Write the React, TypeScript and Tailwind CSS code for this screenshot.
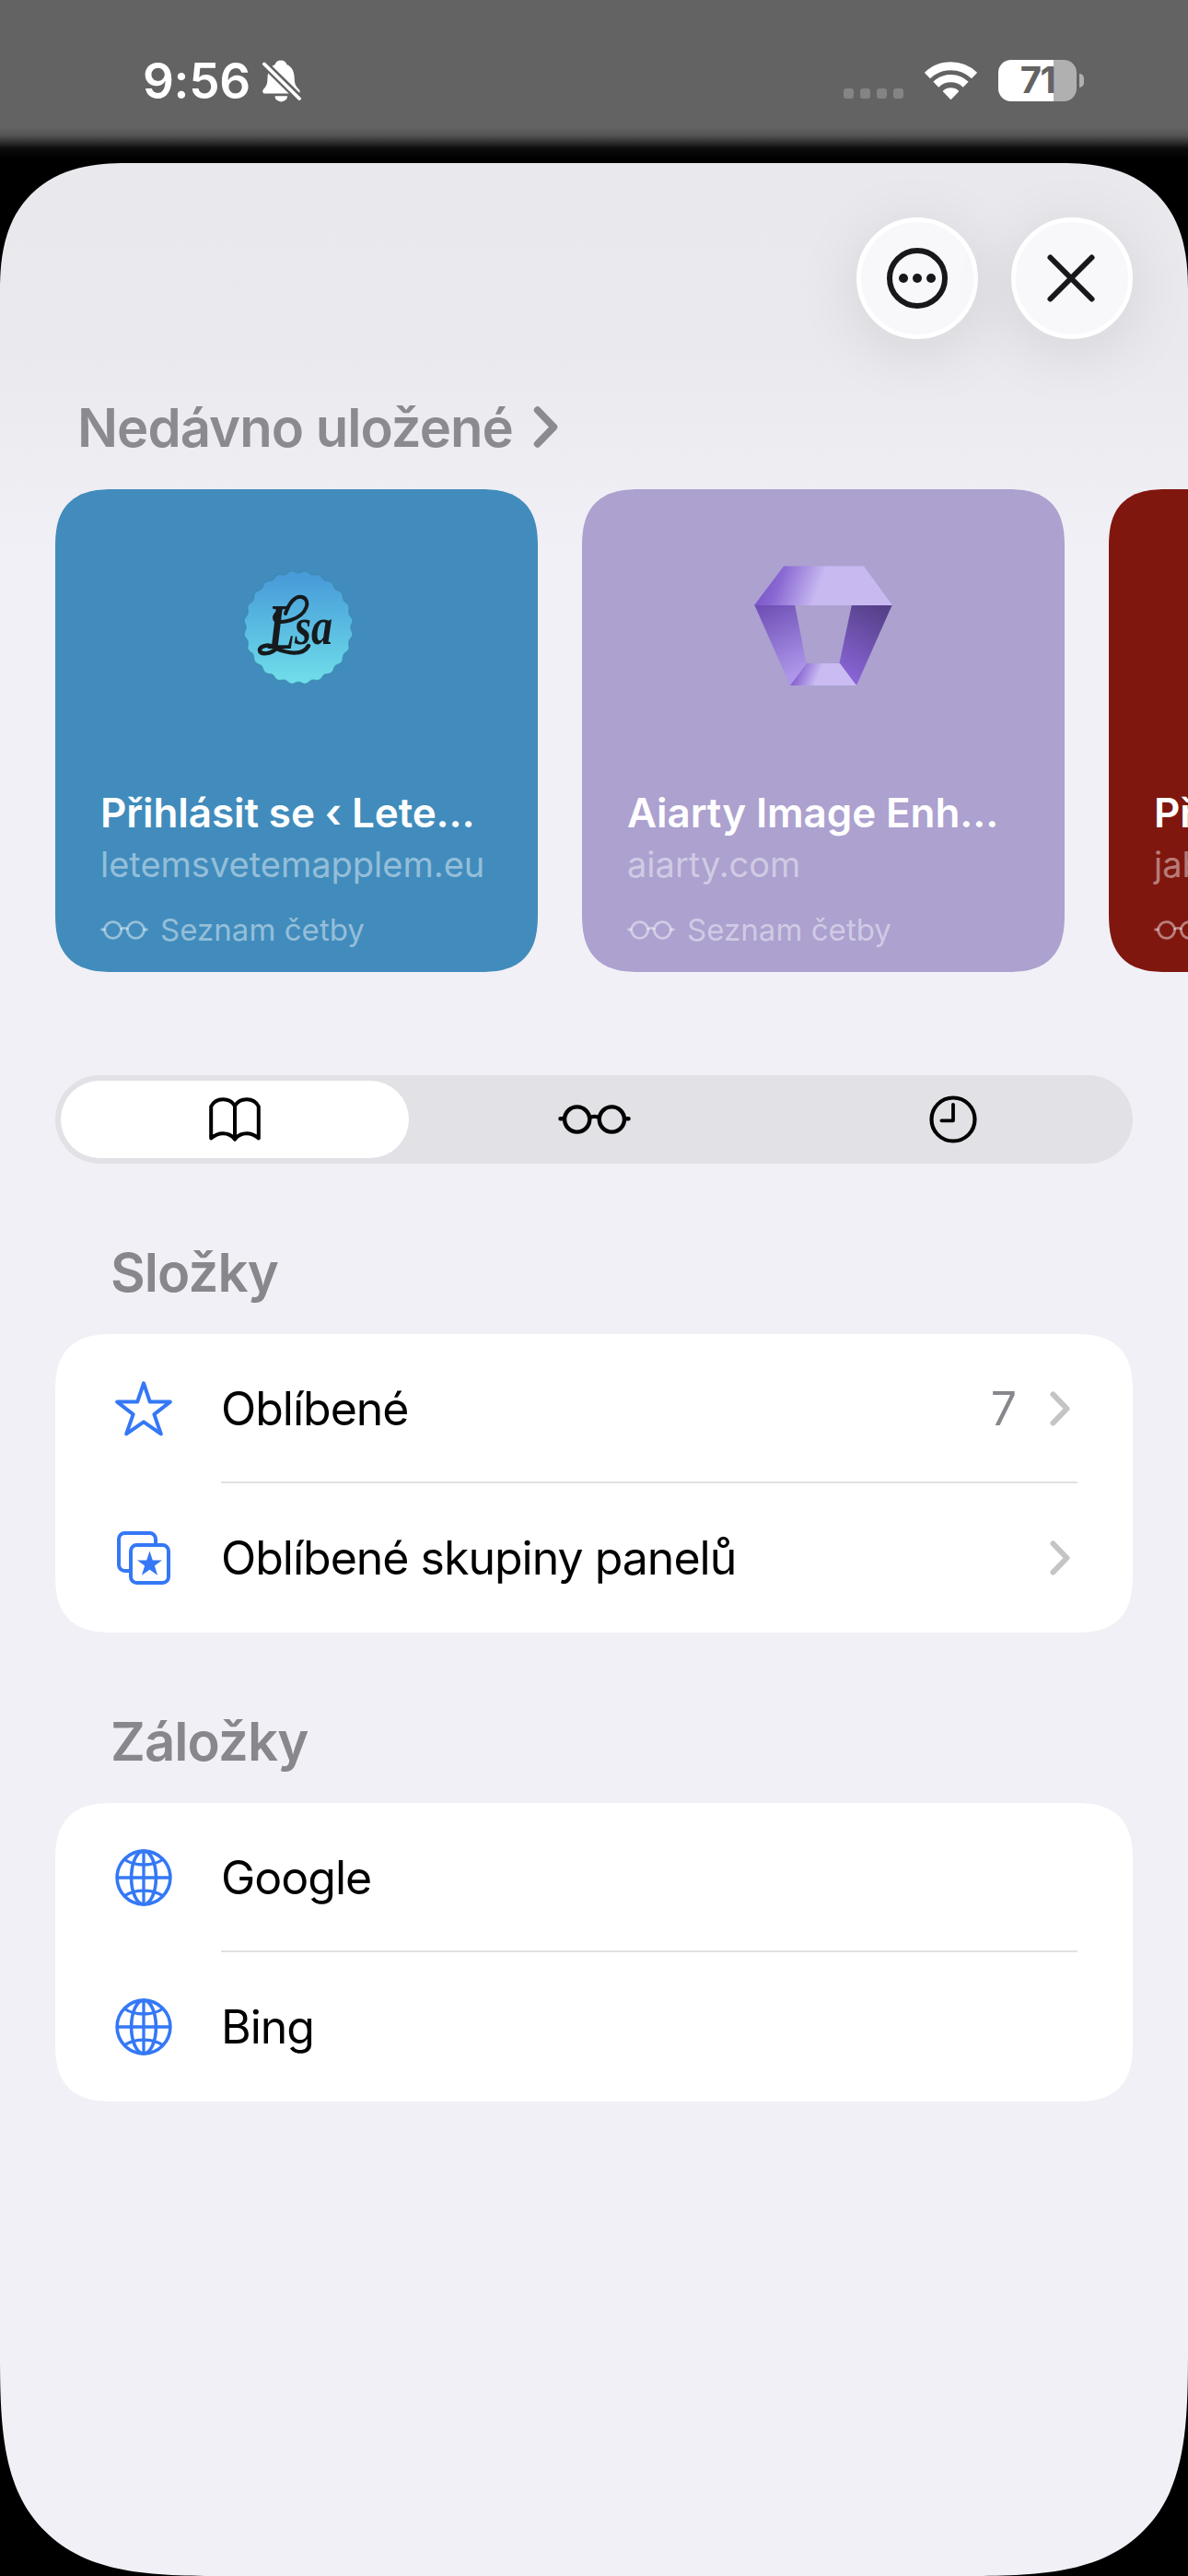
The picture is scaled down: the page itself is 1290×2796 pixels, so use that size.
import type { ReactNode } from "react"

type SavedCard = {
  title: string
  site: string
  color: string
  logo?: ReactNode
}

type Row = {
  label: string
  icon: ReactNode
  count?: number
  chevron?: boolean
}

function BellOffIcon() {
  return (
    <svg className="h-[46px] w-[43px]" viewBox="0 0 43 46" fill="none">
      <path
        fill="#fff"
        d="M20 .5c3.5 0 5.8 2 6.3 4.6 6 2.6 8.2 8 8.4 14.6.2 6 1 8.5 4.9 12.3 2 2.2 1 4.6-1.9 4.6H3c-2.8 0-3.8-2.8-1.6-5C5 27.5 5.3 25 5.5 19.7 5.8 13 8 7.5 13.7 5.1 14.2 2.5 16.5.5 20 .5z"
      />
      <path fill="#fff" d="M13.5 39.2h13.6a6.8 6.2 0 0 1-13.6 0z" />
      <path stroke="#636363" strokeWidth="8.6" d="M-3 -.5 45 46.5" />
      <path stroke="#fff" strokeWidth="3.8" strokeLinecap="round" d="M2 4.5 40 42" />
    </svg>
  )
}

function WifiIcon() {
  return (
    <svg className="h-[43px] w-[57px]" viewBox="0 0 57 43" fill="none" stroke="#fff">
      <path strokeWidth="9" d="M2.9 16.1a36.8 36.8 0 0 1 51.2 0" />
      <path strokeWidth="8.4" d="M12.3 25.8a23 23 0 0 1 32.4 0" />
      <path
        fill="#fff"
        strokeWidth="1.5"
        strokeLinejoin="round"
        d="M28.5 41.2 20.6 33a11.8 11.8 0 0 1 15.8 0z"
      />
    </svg>
  )
}

function GlassesIcon({ className }: { className: string }) {
  return (
    <svg className={className} viewBox="0 0 78.5 32" fill="none" stroke="currentColor" strokeWidth="4.4">
      <circle cx="20.4" cy="16" r="13.6" />
      <circle cx="58.1" cy="16" r="13.6" />
      <path strokeLinecap="round" d="M2.2 15.3h3.6M72.7 15.3h3.6" />
      <path d="M33.4 15c2.4-2.9 9.2-2.9 11.7 0" />
    </svg>
  )
}

function BookIcon() {
  return (
    <svg
      className="h-[48px] w-[56px]"
      viewBox="0 0 56 48"
      fill="none"
      stroke="currentColor"
      strokeWidth="4"
      strokeLinecap="round"
      strokeLinejoin="round"
    >
      <path d="M28 45.5C24.8 41.4 20.6 39.2 15.2 39.2 10 39.2 5.8 41.2 2.2 44.4V10C4.6 5 9.4 2.2 15.2 2.2 20.8 2.2 25.6 5 28 9.4" />
      <path d="M28 45.5c3.2-4.1 7.4-6.3 12.8-6.3 5.2 0 9.4 2 13 5.2V10C51.4 5 46.6 2.2 40.8 2.2 35.2 2.2 30.4 5 28 9.4V45" />
    </svg>
  )
}

function ClockIcon() {
  return (
    <svg className="size-[52px]" viewBox="0 0 52 52" fill="none" stroke="currentColor" strokeWidth="4.2">
      <circle cx="26" cy="26" r="23.5" />
      <path strokeWidth="3.8" strokeLinecap="round" strokeLinejoin="round" d="M26 10v17.3H13.4" />
    </svg>
  )
}

function StarIcon() {
  return (
    <svg
      className="h-[60px] w-[62px]"
      viewBox="0 0 62 60"
      fill="none"
      stroke="currentColor"
      strokeWidth="4"
      strokeLinejoin="round"
    >
      <path d="M31 2.4 37.8 22.6H59.8L42.4 36.2 49.8 57.4 31 44.4 12.2 57.4 19.6 36.2 2.2 22.6H24.2z" />
    </svg>
  )
}

function TabGroupIcon() {
  return (
    <svg className="ml-[2px] size-[58px]" viewBox="0 0 58 58" fill="none" stroke="currentColor" strokeWidth="4">
      <path d="M13 43H8.5A6.5 6.5 0 0 1 2 36.5V8.5A6.5 6.5 0 0 1 8.5 2h27A6.5 6.500 0 0 1 42 8.500V14" />
      <rect x="15" y="15" width="41" height="41" rx="6.500" />
      <path
        fill="currentColor"
        stroke="none"
        d="M35.500 21.500 38.800 31.400H49L40.900 37.600 44.100 47.800 35.500 41.700 26.900 47.800 30.100 37.600 22 31.400H32.200z"
      />
    </svg>
  )
}

function GlobeIcon() {
  return (
    <svg className="size-[62px]" viewBox="0 0 62 62" fill="none" stroke="currentColor" strokeWidth="3.6">
      <circle cx="31" cy="31" r="28.900" />
      <ellipse cx="31" cy="31" rx="13.400" ry="28.900" />
      <path strokeWidth="3.300" d="M31 2v58M2 31h58" />
      <path strokeWidth="3.300" d="M10.500 11.500c11 7.300 30 7.300 41 0M10.500 50.500c11-7.300 30-7.300 41 0" />
    </svg>
  )
}

function Chevron({ className, strokeWidth }: { className: string; strokeWidth: number }) {
  return (
    <svg
      className={className}
      viewBox="0 0 22 38"
      fill="none"
      stroke="currentColor"
      strokeWidth={strokeWidth}
      strokeLinecap="round"
      strokeLinejoin="round"
    >
      <path d="M3.500 3.500 18.500 19 3.500 34.500" />
    </svg>
  )
}

// Wavy outline of the round badge
const badgePath =
  Array.from({ length: 240 }, (_, i) => {
    const a = (i / 240) * Math.PI * 2
    const r = 60.5 - 1.3 * Math.cos(a * 24)
    return `${i === 0 ? "M" : "L"}${(62 + r * 0.96 * Math.sin(a)).toFixed(2)} ${(63 - r * Math.cos(a)).toFixed(2)}`
  }).join("") + "z"

function LsaLogo() {
  return (
    <svg className="ml-[4px] h-[126px] w-[124px]" viewBox="0 0 124 126">
      <defs>
        <linearGradient id="lsa" x1="0" y1="0" x2="0" y2="1">
          <stop offset="0.050" stopColor="#489cd9" />
          <stop offset="0.650" stopColor="#60c6e4" />
          <stop offset="1" stopColor="#72dfeb" />
        </linearGradient>
      </defs>
      <path d={badgePath} fill="url(#lsa)" stroke="#3a86ad" strokeOpacity="0.600" strokeWidth="1.500" />
      <g fill="#161a1c" fontFamily="Liberation Serif, serif" fontStyle="italic" fontWeight="700">
        <text x="29" y="86" fontSize="70" textLength="29" lengthAdjust="spacingAndGlyphs">
          L
        </text>
        <text x="58" y="81" fontSize="56" textLength="41" lengthAdjust="spacingAndGlyphs">
          sa
        </text>
      </g>
      <g fill="none" stroke="#161a1c" strokeLinecap="round">
        <path strokeWidth="4.500" d="M36 85c-7-5-17-1-16 3 1 5 12 4 18-2 10 4 28 9 35-3" />
        <path strokeWidth="4" d="M48 48c4-12 11-20 18-18 10 3 6 19-12 25-10 3-18 3-18-3 0-2 2-4 4-6" />
      </g>
    </svg>
  )
}

function GemLogo() {
  return (
    <svg className="mb-[5px] h-[130px] w-[150px]" viewBox="0 0 150 130">
      <defs>
        <linearGradient id="gem-top" gradientUnits="userSpaceOnUse" x1="12" y1="18" x2="66" y2="38">
          <stop offset="0" stopColor="#7e5bcc" />
          <stop offset="0.250" stopColor="#8a69d3" />
          <stop offset="1" stopColor="#c8baf1" />
        </linearGradient>
        <linearGradient id="gem-left" x1="0" y1="0" x2="0.300" y2="1">
          <stop offset="0" stopColor="#6b4bb2" />
          <stop offset="1" stopColor="#ad96ea" />
        </linearGradient>
        <linearGradient id="gem-right" x1="0.700" y1="0" x2="0.300" y2="1">
          <stop offset="0" stopColor="#554088" />
          <stop offset="1" stopColor="#8b66da" />
        </linearGradient>
        <linearGradient id="gem-bottom" gradientUnits="userSpaceOnUse" x1="46" y1="115" x2="68" y2="124">
          <stop offset="0" stopColor="#8561cf" />
          <stop offset="1" stopColor="#cabbf2" />
        </linearGradient>
      </defs>
      <path fill="url(#gem-left)" d="M0 42H44L57 108 39 130z" />
      <path fill="url(#gem-right)" d="M106 42H150L111 130 92 108z" />
      <path fill="url(#gem-top)" d="M32 .5H119L150 43H0z" />
      <path fill="url(#gem-bottom)" d="M57 106H93L111 130H39z" />
    </svg>
  )
}

const savedCards: SavedCard[] = [
  { title: "Přihlásit se ‹ Lete…", site: "letemsvetemapplem.eu", color: "bg-[#418cbc]", logo: <LsaLogo /> },
  { title: "Aiarty Image Enh…", site: "aiarty.com", color: "bg-[#aca1cf]", logo: <GemLogo /> },
  { title: "Přihlásit se ‹ Jabl…", site: "jablickar.cz", color: "bg-[#7f170f]" },
]

const sections: { name: string; rows: Row[] }[] = [
  {
    name: "Složky",
    rows: [
      { label: "Oblíbené", icon: <StarIcon />, count: 7, chevron: true },
      { label: "Oblíbené skupiny panelů", icon: <TabGroupIcon />, chevron: true },
    ],
  },
  {
    name: "Záložky",
    rows: [
      { label: "Google", icon: <GlobeIcon /> },
      { label: "Bing", icon: <GlobeIcon /> },
    ],
  },
]

function StatusBar() {
  return (
    <header className="flex h-[177px] items-start justify-between bg-[linear-gradient(to_bottom,#636363_0,#636363_138px,#545454_147px,#2c2c2c_155px,#0c0c0c_161px,#000_172px)] pr-[113px] pl-[155px] text-white">
      <div className="mt-[65px] flex h-[46px] items-center gap-[13px]">
        <span className="text-[53px] leading-[46px] font-semibold tracking-[-0.3px]">9:56</span>
        <BellOffIcon />
      </div>
      <div className="mt-[64px] flex h-[46px] items-center">
        <div className="mr-[23px] flex gap-[7px] pt-[29px]">
          {[0, 1, 2, 3].map((dot) => (
            <span key={dot} className="size-[11px] rounded-[3px] bg-[#848484]" />
          ))}
        </div>
        <WifiIcon />
        <div className="ml-[23px] flex h-[45px] w-[85px] items-center justify-center overflow-hidden rounded-[14px] bg-[linear-gradient(to_right,#fff_60px,#b0b0b0_60px)]">
          <span className="text-[40px] leading-none font-bold tracking-[-1.5px] text-[#636363]">71</span>
        </div>
        <span className="ml-[3px] h-[15px] w-[5px] rounded-r-full bg-[#b0b0b0]" />
      </div>
    </header>
  )
}

function RoundButton({ children }: { children: ReactNode }) {
  return (
    <button className="flex size-[132px] items-center justify-center rounded-full border-[5px] border-white bg-[#f8f8fb] text-[#18181a] shadow-[0_12px_70px_rgba(0,0,0,0.1)]">
      {children}
    </button>
  )
}

function SavedCardView({ card }: { card: SavedCard }) {
  return (
    <article
      className={`flex size-[524px] shrink-0 flex-col rounded-[64px] px-[49px] text-white [corner-shape:superellipse(1.4)] ${card.color}`}
    >
      <div className="flex h-[300px] items-center justify-center">{card.logo}</div>
      <h3 className="mt-[21px] text-[44px] leading-[60px] font-semibold tracking-[-0.1px] whitespace-nowrap">
        {card.title}
      </h3>
      <p className="text-[38px] leading-[52px] whitespace-nowrap text-white/45">{card.site}</p>
      <div className="mt-[20px] flex items-center gap-[13px] text-white/45">
        <GlassesIcon className="h-[21px] w-[52px]" />
        <span className="text-[33px] leading-[50px] tracking-[0.05px] whitespace-nowrap">Seznam četby</span>
      </div>
    </article>
  )
}

export default function App() {
  return (
    <div className="h-[2796px] w-[1290px] overflow-hidden bg-black font-[Inter,sans-serif]">
      <StatusBar />
      <main className="h-[2619px] overflow-hidden rounded-t-[138px] rounded-b-[246px] bg-[linear-gradient(to_bottom,#e9e8ed_0,#eae9ee_200px,#f1f0f6_430px)] px-[60px] [corner-shape:superellipse(1.3)_superellipse(1.3)_superellipse(1.65)_superellipse(1.65)]">
        <div className="flex justify-end gap-[36px] pt-[59px]">
          <RoundButton>
            <svg className="size-[68px]" viewBox="0 0 68 68" fill="none" stroke="currentColor" strokeWidth="6">
              <circle cx="34" cy="34" r="30" />
              <g fill="currentColor" stroke="none">
                <circle cx="19" cy="34" r="5" />
                <circle cx="34" cy="34" r="5" />
                <circle cx="49" cy="34" r="5" />
              </g>
            </svg>
          </RoundButton>
          <RoundButton>
            <svg
              className="mr-[2px] size-[54px]"
              viewBox="0 0 54 54"
              stroke="currentColor"
              strokeWidth="6"
              strokeLinecap="round"
            >
              <path d="M4.500 4.500 49.500 49.500M49.500 4.500 4.500 49.500" />
            </svg>
          </RoundButton>
        </div>

        <div className="flex h-[163px] items-center gap-[22px] pt-[28px] pl-[24px] text-[#8a8a8f]">
          <h2 className="text-[58px] leading-[70px] font-semibold tracking-[-0.95px]">Nedávno uložené</h2>
          <Chevron className="h-[45px] w-[27px]" strokeWidth={6.5} />
        </div>
        <div className="flex gap-[48px]">
          {savedCards.map((card) => (
            <SavedCardView key={card.site} card={card} />
          ))}
        </div>

        <div className="mt-[112px] flex h-[96px] rounded-full bg-[#e2e1e6] p-[6px] text-black">
          <div className="flex w-[378px] items-center justify-center rounded-full bg-white">
            <BookIcon />
          </div>
          <div className="flex w-[402px] items-center justify-center">
            <GlassesIcon className="h-[32px] w-[79px]" />
          </div>
          <div className="flex w-[378px] items-center justify-center">
            <ClockIcon />
          </div>
        </div>

        {sections.map((section) => (
          <section key={section.name}>
            <h2 className="pt-[83px] pb-[32px] pl-[60px] text-[58px] leading-[70px] font-semibold tracking-[-0.9px] text-[#88878c]">
              {section.name}
            </h2>
            <ul className="rounded-[64px] bg-white pl-[60px] [corner-shape:superellipse(1.4)]">
              {section.rows.map((row, i) => (
                <li key={row.label} className="flex h-[162px] items-center">
                  <span className="flex w-[120px] pl-[5px] text-[#3478f6]">{row.icon}</span>
                  <div
                    className={`mr-[60px] flex h-full flex-1 items-center text-[50px] text-black ${
                      i < section.rows.length - 1 ? "border-b-2 border-[#e1e1e1] pt-[2px]" : ""
                    }`}
                  >
                    <span className="flex-1 tracking-[-1px]">{row.label}</span>
                    {row.count !== undefined && <span className="mr-[36px] text-[#88878c]">{row.count}</span>}
                    {row.chevron && <Chevron className="mr-[8px] h-[38px] w-[22px] text-[#c4c4c6]" strokeWidth={6} />}
                  </div>
                </li>
              ))}
            </ul>
          </section>
        ))}
      </main>
    </div>
  )
}
